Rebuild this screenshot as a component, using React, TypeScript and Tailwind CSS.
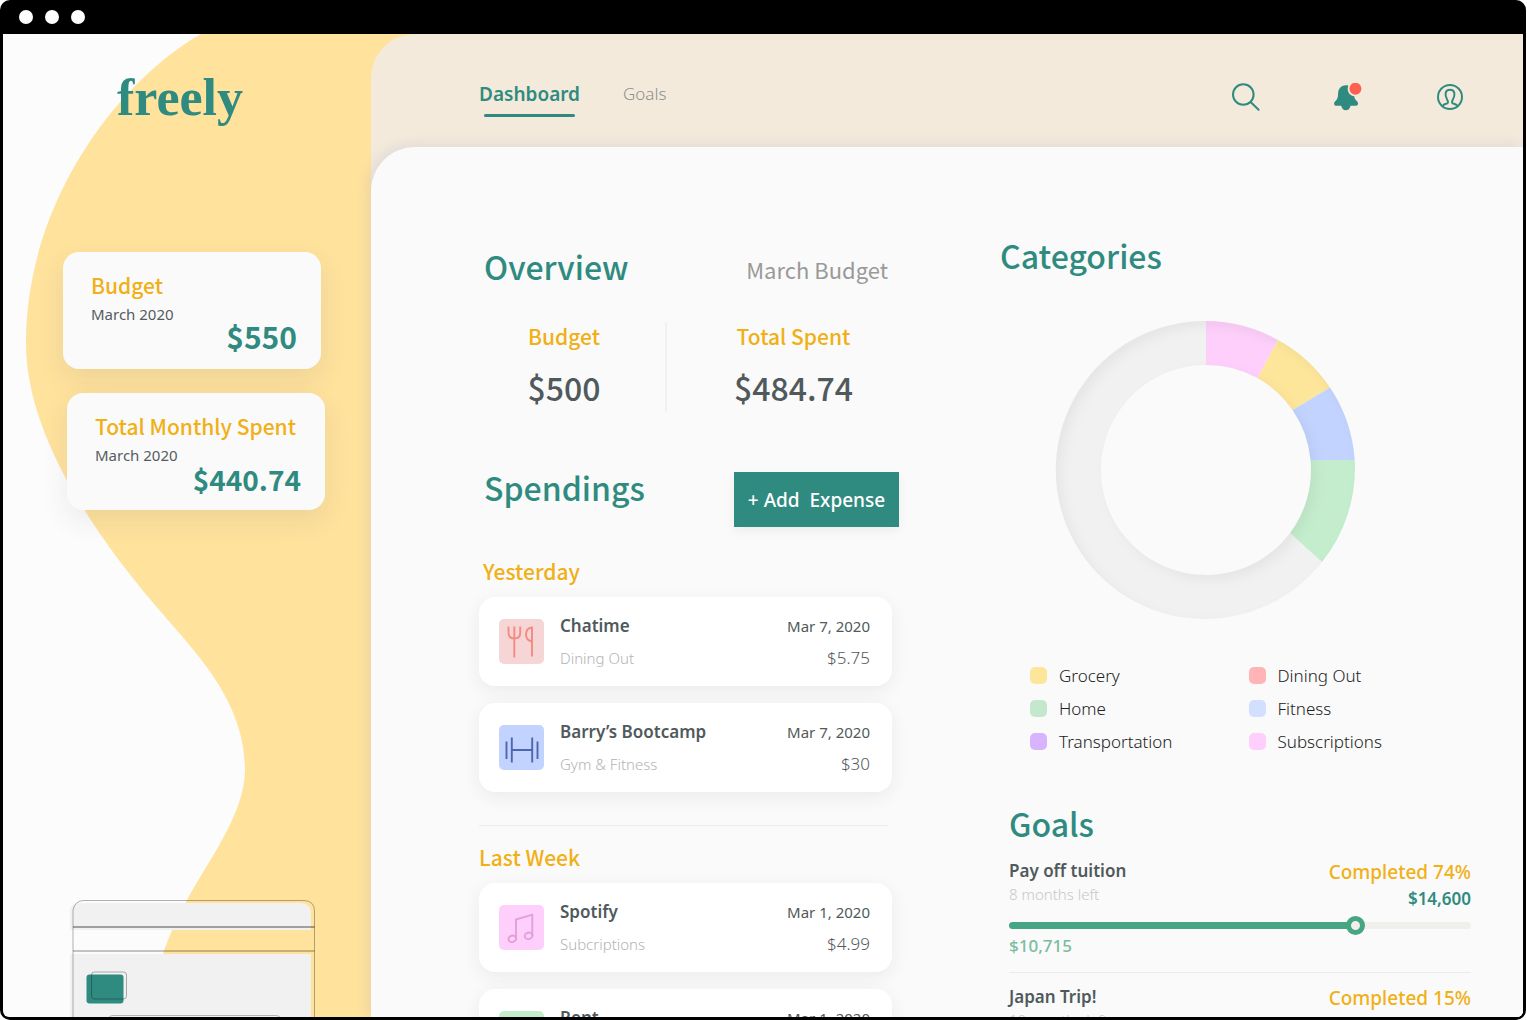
import React from "react";

const CJK = "font-['Noto_Sans_CJK_SC','Noto_Sans',sans-serif]";

function BackgroundWave() {
  return (
    <svg
      className="absolute inset-y-0 left-0 h-full w-[420px]"
      viewBox="3 34 420 983"
      preserveAspectRatio="xMinYMin slice"
      aria-hidden="true"
    >
      <path
        fill="#ffe29c"
        d="M201 34C120 80 26 200 26 343C26 420 74 510 155 605C195 652 245 700 245 770C245 815 205 865 186 902C176 922 168 938 163 954L150 1020H430V34Z"
      />
    </svg>
  );
}

function BankCard() {
  return (
    <svg className="block h-[118px] w-[246px]" viewBox="69 899 246 118" fill="none" aria-hidden="true">
      <path d="M70 930V911Q70 903 80 903H300Q311 903 311 914V930Z" fill="#f1f1f1" />
      <rect x="70" y="954" width="241" height="70" fill="#f1f1f1" />
      <g stroke="#000" strokeOpacity=".3">
        <path d="M73 1020V910Q75 900.500 84 900.500H304Q314.500 901 314.500 911V1020" />
        <path d="M73 927H314.500" strokeWidth="1.500" strokeOpacity=".45" />
        <path d="M73 951H314.500" strokeWidth="1.300" />
      </g>
      <rect x="86.500" y="974.500" width="37" height="29" rx="3" fill="#2f8b80" />
      <rect x="91.500" y="972" width="35" height="27" rx="3" stroke="#000" strokeOpacity=".3" />
      <path d="M108 1018Q110 1015.500 113 1015.500H276Q279 1015.500 281 1018" stroke="#000" strokeOpacity=".25" />
    </svg>
  );
}

function SummaryCard({ title, amount, className, amountClass }: { title: string; amount: string; className: string; amountClass: string }) {
  return (
    <section
      className={`flex h-[117px] w-[258px] flex-col rounded-2xl bg-[#fafafa] pt-5 pr-6 pl-7 shadow-[0_10px_28px_rgba(60,60,90,0.09)] ${className}`}
    >
      <h2 className={`text-[21px] leading-[26px] font-medium whitespace-nowrap text-[#f0b016] ${CJK}`}>{title}</h2>
      <p className="mt-1 text-[15px] leading-6 text-[#555c61]">March 2020</p>
      <p className={`self-end leading-8 font-bold text-[#2f8b80] ${CJK} ${amountClass}`}>{amount}</p>
    </section>
  );
}

function SearchIcon() {
  return (
    <svg className="h-7 w-7" viewBox="0 0 28 28" fill="none" stroke="#2f8b80" strokeWidth="2" strokeLinecap="round" aria-hidden="true">
      <circle cx="11.300" cy="11.500" r="10.300" />
      <path d="M18.800 19.200L26.600 26.800" />
    </svg>
  );
}

function BellIcon() {
  return (
    <svg className="h-7 w-7" viewBox="0 0 28 28" aria-hidden="true">
      <path
        fill="#2f8b80"
        d="M11.800 2.200C6.800 2.300 4.200 6 4.100 10.500C4 14.500 3.300 16.500 1 18.400C-.5 19.700 0 22.700 1.700 22.700H7.200C8 25.800 9.500 27.300 11.900 27.300S15.800 25.800 16.600 22.700H22.200C24.100 22.700 24.800 19.800 23.200 18.500C21.500 17 20.500 15.700 20.200 13.300C16.500 13 13.600 9.500 13.700 5.500C13.800 4.300 14 3.200 14.300 2.400C13.500 2.200 12.700 2.200 11.800 2.200Z"
      />
      <circle cx="21.400" cy="5.700" r="6" fill="#ff6052" />
    </svg>
  );
}

function ProfileIcon() {
  return (
    <svg className="h-7 w-7" viewBox="0 0 28 28" fill="none" stroke="#2f8b80" strokeWidth="2" strokeLinejoin="round" aria-hidden="true">
      <circle cx="14" cy="14" r="12" />
      <path d="M6.800 22.800C7.800 21 9.800 21 11.300 20.300C12.400 19.700 12 18.200 11.300 17C8.300 12 9 6.700 14 6.700S19.700 12 16.700 17C16 18.200 15.600 19.700 16.700 20.300C18.200 21 20.200 21 21.200 22.800" />
    </svg>
  );
}

function UtensilsIcon() {
  return (
    <svg className="h-[45px] w-[45px]" viewBox="0 0 45 45" fill="none" stroke="#f58a82" strokeWidth="1.900" aria-hidden="true">
      <path d="M9.500 7.500V13.500C9.500 17 11.500 19.500 15.300 19.500S21.200 17 21.200 13.500V7.500M15.300 7.500V38.500" />
      <path d="M33 37.500V8.500C29 9 27 12 27 15.500C27 19.500 29.500 21.800 33 22.500" />
    </svg>
  );
}

function DumbbellIcon() {
  return (
    <svg className="h-[45px] w-[45px]" viewBox="0 0 45 45" fill="none" stroke="#4d66b0" strokeWidth="1.900" aria-hidden="true">
      <path d="M7.500 16.500V34M12.800 12.500V37.500M33.200 12.500V37.500M38.500 16.500V34M12.800 25H33.200" />
    </svg>
  );
}

function MusicIcon() {
  return (
    <svg className="h-[45px] w-[45px]" viewBox="0 0 45 45" fill="none" stroke="#e39fdc" strokeWidth="1.900" aria-hidden="true">
      <path d="M17 34V14.500L33.300 9.700V31" />
      <ellipse cx="13.300" cy="33.800" rx="3.900" ry="3.200" transform="rotate(-15 13.300 33.800)" />
      <ellipse cx="29.600" cy="30.800" rx="3.900" ry="3.200" transform="rotate(-15 29.600 30.800)" />
    </svg>
  );
}

function HouseIcon() {
  return (
    <svg className="h-[45px] w-[45px]" viewBox="0 0 45 45" fill="none" stroke="#5fb87a" strokeWidth="1.900" aria-hidden="true">
      <path d="M9 22L22.500 10L36 22M13 19V35H32V19" />
    </svg>
  );
}

type Expense = { name: string; category: string; date: string; amount: string; tile: string; icon: React.ReactNode };

const yesterday: Expense[] = [
  { name: "Chatime", category: "Dining Out", date: "Mar 7, 2020", amount: "$5.75", tile: "bg-[#f6d5d6]", icon: <UtensilsIcon /> },
  { name: "Barry’s Bootcamp", category: "Gym & Fitness", date: "Mar 7, 2020", amount: "$30", tile: "bg-[#c2d3ff]", icon: <DumbbellIcon /> },
];

const lastWeek: Expense[] = [
  { name: "Spotify", category: "Subcriptions", date: "Mar 1, 2020", amount: "$4.99", tile: "bg-[#fdcffa]", icon: <MusicIcon /> },
  { name: "Rent", category: "Home", date: "Mar 1, 2020", amount: "$400", tile: "bg-[#c4edcd]", icon: <HouseIcon /> },
];

function ExpenseList({ items }: { items: Expense[] }) {
  return (
    <ul className="mt-[9px] flex flex-col gap-[17px]">
      {items.map((e) => (
        <li
          key={e.name}
          className="flex h-[89px] items-center rounded-2xl bg-white pr-[22px] pl-5 shadow-[0_5px_18px_rgba(40,40,80,0.07)]"
        >
          <span className={`shrink-0 rounded-[5px] ${e.tile}`}>{e.icon}</span>
          <div className="ml-4 grow">
            <h4 className="text-[17px] leading-8 font-semibold text-[#50595c]">{e.name}</h4>
            <p className="text-[15px] leading-8 font-light text-[#b3b3b3]">{e.category}</p>
          </div>
          <div className="text-right">
            <p className="text-[15px] leading-8 text-[#50595c]">{e.date}</p>
            <p className="text-[17px] leading-8 font-light text-[#50595c]">{e.amount}</p>
          </div>
        </li>
      ))}
    </ul>
  );
}

function Donut() {
  return (
    <svg className="mt-11 ml-12 block h-[298px] w-[298px] overflow-visible" viewBox="1057 321 298 298" role="img" aria-label="Spending by category">
      <defs>
        <filter id="inner-shade" x="-5%" y="-5%" width="110%" height="110%" colorInterpolationFilters="sRGB">
          <feOffset in="SourceAlpha" dx="5" dy="5" />
          <feGaussianBlur stdDeviation="6" result="moved" />
          <feComposite in="SourceAlpha" in2="moved" operator="out" />
          <feColorMatrix values="0 0 0 0 0  0 0 0 0 0  0 0 0 0 0  0 0 0 .05 0" result="shade" />
          <feMerge>
            <feMergeNode in="SourceGraphic" />
            <feMergeNode in="shade" />
          </feMerge>
        </filter>
      </defs>
      <g filter="url(#inner-shade)">
        <path fill="#f1f1f1" d="M1322 562A149 149 0 1 1 1206 321V365A105 105 0 1 0 1290 533Z" />
        <path fill="#fdcffa" d="M1206 321A149 149 0 0 1 1278 340L1257.500 378A105 105 0 0 0 1206 365Z" />
        <path fill="#fde69a" d="M1278 340A149 149 0 0 1 1330 387.500L1292.500 410A105 105 0 0 0 1257.500 378Z" />
        <path fill="#c2d3ff" d="M1330 387.500A149 149 0 0 1 1354.700 460H1310.500A105 105 0 0 0 1292.500 410Z" />
        <path fill="#c4edcd" d="M1354.700 460A149 149 0 0 1 1322 562L1290 533A105 105 0 0 0 1310.500 460Z" />
      </g>
    </svg>
  );
}

const legend = [
  { label: "Grocery", color: "bg-[#fde69a]" },
  { label: "Dining Out", color: "bg-[#ffb5b5]" },
  { label: "Home", color: "bg-[#c4e8cd]" },
  { label: "Fitness", color: "bg-[#d2dfff]" },
  { label: "Transportation", color: "bg-[#d8b4fe]" },
  { label: "Subscriptions", color: "bg-[#fdcffa]" },
];

const goals = [
  { name: "Pay off tuition", left: "8 months left", done: 74, target: "$14,600", saved: "$10,715", position: 76 },
  { name: "Japan Trip!", left: "10 months left", done: 15, target: "$3,000", saved: "$450", position: 15 },
];

export default function App() {
  return (
    <div className="h-screen overflow-hidden bg-white font-['Noto_Sans',sans-serif]">
      <div className="mr-px flex h-full flex-col rounded-[10px] bg-black px-[3px] pb-[3px]">
        <div className="flex h-[34px] shrink-0 items-center gap-3 pl-4">
          <span className="h-3.5 w-3.5 rounded-full bg-white" />
          <span className="h-3.5 w-3.5 rounded-full bg-white" />
          <span className="h-3.5 w-3.5 rounded-full bg-white" />
        </div>

        <div className="relative flex min-h-0 grow overflow-hidden rounded-b-md bg-[#fcfcfc]">
          <BackgroundWave />

          <aside className="relative flex w-[368px] shrink-0 flex-col">
            <a
              href="#"
              className="mt-8 ml-[114px] font-['Liberation_Serif',serif] text-[52px] leading-[64px] font-bold text-[#2f8b80]"
            >
              freely
            </a>
            <SummaryCard title="Budget" amount="$550" className="mt-[122px] ml-[60px]" amountClass="-mt-1.5 text-[30px]" />
            <SummaryCard title="Total Monthly Spent" amount="$440.74" className="mt-6 ml-16" amountClass="-mt-1 text-[28px]" />
            <div className="mt-auto ml-[66px]">
              <BankCard />
            </div>
          </aside>

          <div className="relative flex min-w-0 grow flex-col rounded-tl-[44px] bg-[#f3eadb]">
            <header className="flex h-[113px] shrink-0 items-center justify-between pr-[59px] pl-[108px]">
              <nav className="flex items-center gap-[43px] pt-1.5">
                <a href="#" className="relative text-[19px] leading-8 font-semibold text-[#2f8b80]">
                  Dashboard
                  <span className="absolute inset-x-[5px] -bottom-[7px] h-[3px] rounded-sm bg-[#2f8b80]" />
                </a>
                <a href="#" className="text-[17px] leading-8 font-light text-[#8f8f8f]">
                  Goals
                </a>
              </nav>
              <div className="flex items-center gap-[74px] pt-3">
                <button type="button" aria-label="Search">
                  <SearchIcon />
                </button>
                <button type="button" aria-label="Notifications">
                  <BellIcon />
                </button>
                <button type="button" aria-label="Profile">
                  <ProfileIcon />
                </button>
              </div>
            </header>

            <main className="grid min-h-0 grow grid-cols-[413fr_462fr] gap-[117px] rounded-tl-[44px] bg-[#fafafa] pr-[52px] pl-[108px] shadow-[-3px_-2px_12px_rgba(150,150,200,0.2)]">
              <div>
                <div className="mt-[100px] flex h-11 items-start justify-between pr-1 pl-[5px]">
                  <h2 className={`text-[32px] leading-[38px] font-medium text-[#2f8b80] ${CJK}`}>Overview</h2>
                  <p className={`text-[22px] leading-[44px] text-[#999] ${CJK}`}>March Budget</p>
                </div>

                <dl className={`mt-[31px] flex h-[90px] text-center ${CJK}`}>
                  <div className="w-[188px] border-r-2 border-[#f1f1f1] pr-4">
                    <dt className="text-[21px] leading-7 font-medium text-[#f0b016]">Budget</dt>
                    <dd className="mt-[15px] text-[32px] leading-[44px] font-medium text-[#50595c]">$500</dd>
                  </div>
                  <div className="grow pl-7">
                    <dt className="text-[21px] leading-7 font-medium text-[#f0b016]">Total Spent</dt>
                    <dd className="mt-[15px] text-[32px] leading-[44px] font-medium text-[#50595c]">$484.74</dd>
                  </div>
                </dl>

                <div className="-mr-[7px] mt-[60px] flex items-start justify-between pl-[5px]">
                  <h2 className={`text-[32px] leading-[30px] font-medium text-[#2f8b80] ${CJK}`}>Spendings</h2>
                  <button
                    type="button"
                    className="h-[55px] w-[165px] bg-[#2f8b80] pt-0.5 text-[19px] font-medium whitespace-pre text-white shadow-[0_4px_10px_rgba(0,0,0,0.06)]"
                  >
                    {"+ Add  Expense"}
                  </button>
                </div>

                <h3 className={`mt-7 ml-1 text-[21px] leading-8 font-medium text-[#f0b016] ${CJK}`}>Yesterday</h3>
                <div className="pt-px">
                  <ExpenseList items={yesterday} />
                </div>
                <hr className="mt-[33px] mr-1 border-[#ececec]" />
                <h3 className={`mt-[15px] text-[21px] leading-8 font-medium text-[#f0b016] ${CJK}`}>Last Week</h3>
                <div className="pt-px">
                  <ExpenseList items={lastWeek} />
                </div>
              </div>

              <div>
                <h2 className={`mt-[86px] -ml-[9px] text-[32px] leading-[44px] font-medium text-[#2f8b80] ${CJK}`}>Categories</h2>
                <Donut />
                <ul className="mt-10 mr-1 ml-[21px] grid grid-cols-2">
                  {legend.map((l) => (
                    <li key={l.label} className="flex items-center gap-3 text-[17px] leading-[33px] font-light text-[#222]">
                      <span className={`h-[17px] w-[17px] rounded-[5px] ${l.color}`} />
                      {l.label}
                    </li>
                  ))}
                </ul>

                <h2 className={`mt-[43px] text-[32px] leading-[44px] font-medium text-[#2f8b80] ${CJK}`}>Goals</h2>
                <ul className="pt-0.5">
                  {goals.map((g, i) => (
                    <li key={g.name} className="h-[126px] border-b border-[#ececec] pt-3">
                      <div className="flex justify-between">
                        <div>
                          <label htmlFor={`goal-${i}`} className="block text-[17px] leading-6 font-semibold text-[#50595c]">
                            {g.name}
                          </label>
                          <p className="text-[15px] leading-[22px] font-light text-[#c8c8c8]">{g.left}</p>
                        </div>
                        <div className="text-right">
                          <p className="text-[19px] leading-[26px] font-medium text-[#f0b016]">Completed {g.done}%</p>
                          <p className="text-[17px] leading-7 font-semibold text-[#2f8b80]">{g.target}</p>
                        </div>
                      </div>
                      <input
                        id={`goal-${i}`}
                        type="range"
                        min={0}
                        max={100}
                        defaultValue={g.position}
                        className="mt-[3px] block h-[18px] w-full appearance-none bg-transparent [&::-webkit-slider-runnable-track]:h-[7px] [&::-webkit-slider-runnable-track]:rounded-full [&::-webkit-slider-runnable-track]:bg-[image:var(--fill)] [&::-webkit-slider-thumb]:-mt-[6px] [&::-webkit-slider-thumb]:h-[19px] [&::-webkit-slider-thumb]:w-[19px] [&::-webkit-slider-thumb]:appearance-none [&::-webkit-slider-thumb]:rounded-full [&::-webkit-slider-thumb]:border-[5px] [&::-webkit-slider-thumb]:border-[#46a583] [&::-webkit-slider-thumb]:bg-[#f0efea]"
                        style={{ "--fill": `linear-gradient(to right, #46a583 ${g.position - 1}%, #f0efea ${g.position - 1}%)` } as React.CSSProperties}
                      />
                      <p className="text-[17px] leading-6 font-medium text-[#78bd9f]">{g.saved}</p>
                    </li>
                  ))}
                </ul>
              </div>
            </main>
          </div>
        </div>
      </div>
    </div>
  );
}
